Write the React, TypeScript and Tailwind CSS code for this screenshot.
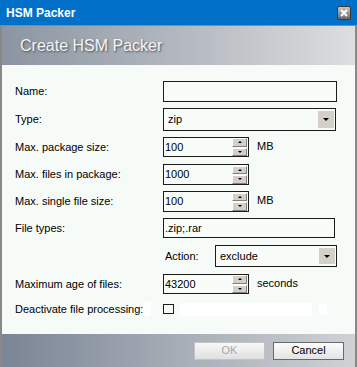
import React from "react"

const font = { fontFamily: "Tahoma, 'Liberation Sans', Arial, sans-serif" }

function Spin() {
  return (
    <div className="flex flex-col w-[15px] h-[18px] my-auto mr-[1px] gap-[1px]">
      <div className="flex-1 bg-[#d4d0c8] border-t border-l border-white border-r border-b border-r-[#808080] border-b-[#808080] flex items-center justify-center">
        <div className="w-0 h-0 border-l-[2px] border-r-[2px] border-b-[2px] border-l-transparent border-r-transparent border-b-black" />
      </div>
      <div className="flex-1 bg-[#d4d0c8] border-t border-l border-white border-r border-b border-r-[#808080] border-b-[#808080] flex items-center justify-center">
        <div className="w-0 h-0 border-l-[2px] border-r-[2px] border-t-[2px] border-l-transparent border-r-transparent border-t-black" />
      </div>
    </div>
  )
}

function SpinInput({ value, unit, h = "h-[21px]" }: { value: string; unit?: string; h?: string }) {
  return (
    <div className="flex items-start">
      <div className={`w-[86px] ${h} border border-[#1c1c1c] bg-[#f7fcf9] flex`}>
        <span className="flex-1 pl-[1px] self-center leading-none">{value}</span>
        <Spin />
      </div>
      {unit && <span className="ml-[8px] mt-[1px]">{unit}</span>}
    </div>
  )
}

function Select({ value, w }: { value: string; w: string }) {
  return (
    <div className={`${w} h-full border border-[#1c1c1c] bg-[#f7fcf9] flex items-center`}>
      <span className="flex-1 pl-[4px]">{value}</span>
      <div className="w-[16px] h-[calc(100%-4px)] mr-[1px] bg-[#d4d0c8] flex items-center justify-center">
        <div className="w-0 h-0 border-l-[3px] border-r-[3px] border-t-[3px] border-l-transparent border-r-transparent border-t-black" />
      </div>
    </div>
  )
}

function Row({ label, children, cls }: { label: string; children: React.ReactNode; cls: string }) {
  return (
    <div className={`flex items-center ${cls}`}>
      <span className="w-[148px] shrink-0 whitespace-nowrap">{label}</span>
      {children}
    </div>
  )
}

export default function App() {
  return (
    <div className="w-[357px] h-[367px] flex flex-col text-[11px] text-black bg-[#888]" style={font}>
      {/* Title bar */}
      <div className="h-[25px] bg-[#0070c8] flex items-center justify-between pl-[6px] pr-[6px]">
        <span className="text-white font-bold text-[12px]">HSM Packer</span>
        <div className="w-[14px] h-[14px] rounded-[2px] border border-[#3a3a3a] bg-gradient-to-b from-[#c8c8c8] to-[#6a6a6a] flex items-center justify-center">
          <svg width="8" height="8" viewBox="0 0 8 8">
            <path d="M1 1 L7 7 M7 1 L1 7" stroke="white" strokeWidth="2" />
          </svg>
        </div>
      </div>

      <div className="flex-1 flex flex-col mx-[2px] mt-[1px]">
        {/* Header */}
        <div className="h-[39px] bg-gradient-to-r from-[#8b95a1] via-[#b3b8bf] to-[#dcdedf] flex items-center pl-[18px]">
          <span className="text-[16px] text-[#f4f4f4] [text-shadow:1px_1px_2px_#4a4f58]">Create HSM Packer</span>
        </div>

        {/* Body */}
        <div className="flex-1 bg-[#f6fbf8] flex flex-col pl-[13px] pt-[16px]">
          <Row label="Name:" cls="h-[21px]">
            <div className="w-[174px] h-full border border-[#1c1c1c] bg-[#f7fcf9]" />
          </Row>
          <Row label="Type:" cls="h-[23px] mt-[6px]">
            <Select value="zip" w="w-[173px]" />
          </Row>
          <Row label="Max. package size:" cls="h-[20px] mt-[6px]">
            <SpinInput value="100" unit="MB" h="h-[20px]" />
          </Row>
          <Row label="Max. files in package:" cls="h-[21px] mt-[7px]">
            <SpinInput value="1000" />
          </Row>
          <Row label="Max. single file size:" cls="h-[21px] mt-[6px]">
            <SpinInput value="100" unit="MB" />
          </Row>
          <Row label="File types:" cls="h-[20px] mt-[6px]">
            <div className="w-[172px] h-full border border-[#1c1c1c] bg-[#f7fcf9] flex items-center pl-[1px]">.zip;.rar</div>
          </Row>
          <div className="flex items-center h-[22px] mt-[7px] pl-[150px]">
            <span className="w-[50px]">Action:</span>
            <Select value="exclude" w="w-[122px]" />
          </div>
          <Row label="Maximum age of files:" cls="h-[20px] mt-[7px]">
            <SpinInput value="43200" unit="seconds" h="h-[20px]" />
          </Row>
          <div className="flex items-center h-[14px] mt-[8px]">
            <div className="w-[148px] shrink-0 flex items-center overflow-hidden">
              <span className="whitespace-nowrap">Deactivate file processing:</span>
              <div className="w-[8px] h-[14px] bg-white shrink-0" />
            </div>
            <div className="w-[11px] h-[10px] border border-[#1c1c1c]" />
            <div className="w-[132px] h-[13px] bg-white ml-[6px]" />
            <div className="w-[8px] h-[11px] bg-white ml-[7px]" />
          </div>
        </div>

        {/* Footer */}
        <div className="h-[33px] bg-gradient-to-r from-[#7a8595] via-[#a6adb6] to-[#cfd2d5] flex items-center justify-end gap-[8px] pr-[11px]">
          <div className="w-[71px] h-[18px] border border-[#c0c4c8] bg-gradient-to-b from-[#f8f8f8] to-[#e0e0e0] flex items-center justify-center text-[#a8a8a8]">OK</div>
          <div className="w-[71px] h-[18px] border border-[#6a6a6a] bg-gradient-to-b from-[#fcfcfc] to-[#e4e4e4] flex items-center justify-center">Cancel</div>
        </div>
      </div>
    </div>
  )
}
